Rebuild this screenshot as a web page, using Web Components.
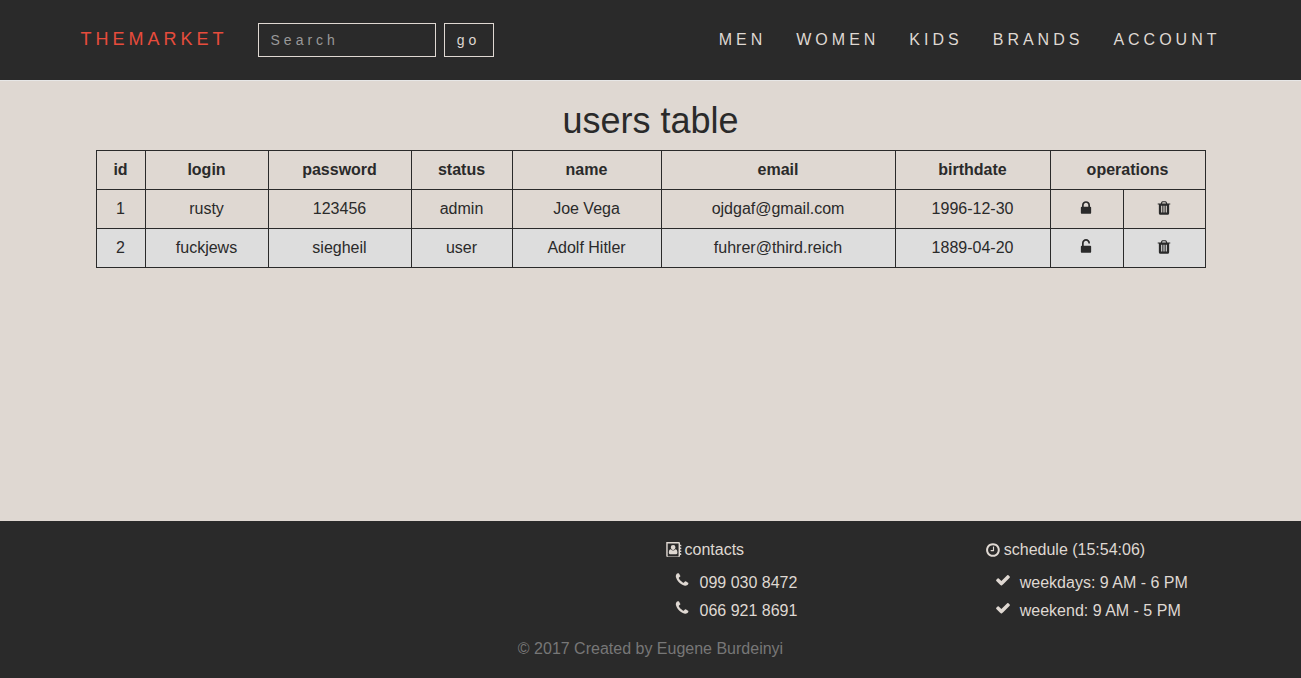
<!DOCTYPE html>
<html lang="en">
<head>
<meta charset="utf-8">
<meta name="viewport" content="width=device-width, initial-scale=1">
<title>users table</title>
<style>
  body {
    margin: 0;
    font: 16px/20px "Liberation Sans", Arial, sans-serif;
    color: #2a2a2a;
    background: #dfd8d2;
    --dark: #2a2a2a;
    --light: #dfd8d2;
    --brand: #e74c3c;
  }
</style>
</head>
<body>
<market-page>
  <market-header slot="header">
    <nav-link href="#men">MEN</nav-link>
    <nav-link href="#women">WOMEN</nav-link>
    <nav-link href="#kids">KIDS</nav-link>
    <nav-link href="#brands">BRANDS</nav-link>
    <nav-link href="#account">ACCOUNT</nav-link>
  </market-header>
  <users-table></users-table>
  <market-footer slot="footer">
    <info-list slot="contacts" icon="book" item-icon="phone" heading="contacts" items="099 030 8472|066 921 8691"></info-list>
    <info-list slot="schedule" icon="clock" item-icon="check" heading="schedule (15:54:06)" items="weekdays: 9 AM - 6 PM|weekend: 9 AM - 5 PM"></info-list>
    © 2017 Created by Eugene Burdeinyi
  </market-footer>
</market-page>
<script>
const ICONS = {
  lock: '<path d="M640 768h512v-192q0-106-75-181t-181-75-181 75-75 181v192zm832 96v576q0 40-28 68t-68 28h-960q-40 0-68-28t-28-68v-576q0-40 28-68t68-28h32v-192q0-184 132-316t316-132 316 132 132 316v192h32q40 0 68 28t28 68z"/>',
  unlock: '<path d="M1376 768q40 0 68 28t28 68v576q0 40-28 68t-68 28h-960q-40 0-68-28t-28-68v-576q0-40 28-68t68-28h32v-320q0-185 131.500-316.500t316.500-131.500 316.500 131.500 131.500 316.500q0 26-19 45t-45 19h-64q-26 0-45-19t-19-45q0-106-75-181t-181-75-181 75-75 181v320h736z"/>',
  trash: '<path d="M704 1376v-704q0-14-9-23t-23-9h-64q-14 0-23 9t-9 23v704q0 14 9 23t23 9h64q14 0 23-9t9-23zm256 0v-704q0-14-9-23t-23-9h-64q-14 0-23 9t-9 23v704q0 14 9 23t23 9h64q14 0 23-9t9-23zm256 0v-704q0-14-9-23t-23-9h-64q-14 0-23 9t-9 23v704q0 14 9 23t23 9h64q14 0 23-9t9-23zm-544-992h448l-48-117q-7-9-17-11h-317q-10 2-17 11zm928 32v64q0 14-9 23t-23 9h-96v948q0 83-47 143.500t-113 60.500h-832q-66 0-113-58.500t-47-141.500v-952h-96q-14 0-23-9t-9-23v-64q0-14 9-23t23-9h309l70-167q15-37 54-63t79-26h320q40 0 79 26t54 63l70 167h309q14 0 23 9t9 23z"/>',
  clock: '<path d="M1024 544v448q0 14-9 23t-23 9h-320q-14 0-23-9t-9-23v-64q0-14 9-23t23-9h224v-352q0-14 9-23t23-9h64q14 0 23 9t9 23zm416 352q0-148-73-273t-198-198-273-73-273 73-198 198-73 273 73 273 198 198 273 73 273-73 198-198 73-273zm224 0q0 209-103 385.500t-279.500 279.500-385.500 103-385.500-103-279.500-279.500-103-385.500 103-385.500 279.500-279.500 385.500-103 385.500 103 279.500 279.500 103 385.500z"/>',
  check: '<path d="M1671 566q0 40-28 68l-724 724-136 136q-28 28-68 28t-68-28l-136-136-362-362q-28-28-28-68t28-68l136-136q28-28 68-28t68 28l294 295 656-657q28-28 68-28t68 28l136 136q28 28 28 68z"/>',
  phone: '<path d="M1600 1240q0 27-10 70.500t-21 68.500q-21 50-122 106-94 51-186 51-27 0-53-3.500t-57-12.500-47-14.500-55.500-20.500-49.500-18q-98-35-175-83-127-79-264-216t-216-264q-48-77-83-175-3-9-18-49.500t-20.500-55.500-14.500-47-12.500-57-3.500-53q0-92 51-186 56-101 106-122 25-11 68.500-21t70.500-10q14 0 21 3 18 6 53 76 11 19 30 54t35 63.500 31 53.500q3 4 17.500 25t21.500 35.500 7 28.500q0 20-28.500 50t-62 55-62 53-28.500 46q0 9 5 22.500t8.500 20.500 14 24 11.500 19q76 137 174 235t235 174q2 1 19 11.500t24 14 20.500 8.500 22.500 5q18 0 46-28.500t53-62 55-62 50-28.500q14 0 28.500 7t35.500 21.500 25 17.500q25 15 53.500 31t63.500 35 54 30q70 35 76 53 3 7 3 21z"/>',
  book: '<path fill-rule="evenodd" d="M140 0h1260q140 0 140 140v160h100q46 0 46 46v90q0 46-46 46h-100v140h100q46 0 46 46v90q0 46-46 46h-100v140h100q46 0 46 46v90q0 46-46 46h-100v140h100q46 0 46 46v90q0 46-46 46h-100v104q0 140-140 140h-1260q-140 0-140-140v-1512q0-140 140-140zm20 160v1472h1220v-1472z"/><path d="M770 330a260 260 0 0 1 260 270c0 150-110 300-260 300s-260-150-260-300a260 260 0 0 1 260-270zM520 800q110 140 250 140t250-140c170 10 230 190 230 400q0 160-130 160h-700q-130 0-130-160c0-210 60-390 230-400z"/>'
};

const VIEW_BOXES = { clock: '128 0 1664 1792', phone: '100 0 1792 1792', book: '-28 0 1792 1792' };

class BaseElement extends HTMLElement {
  connectedCallback() {
    if (!this.shadowRoot) this.attachShadow({ mode: 'open' }).innerHTML = this.render();
  }
}

customElements.define('market-icon', class extends BaseElement {
  render() {
    const name = this.getAttribute('name');
    return `<style>
      :host { display: inline-block; width: 16px; height: 16px; }
      :host([name="clock"]) { width: 15px; }
      svg { display: block; width: 100%; height: 100%; fill: currentColor; }
    </style><svg viewBox="${VIEW_BOXES[name] || '0 0 1792 1792'}" aria-hidden="true">${ICONS[name]}</svg>`;
  }
});

customElements.define('market-page', class extends BaseElement {
  render() {
    return `<style>
      :host { display: flex; flex-direction: column; min-height: 100vh; }
      main { flex: 1; }
    </style><slot name="header"></slot><main><slot></slot></main><slot name="footer"></slot>`;
  }
});

customElements.define('nav-link', class extends BaseElement {
  render() {
    return `<style>
      :host { display: block; }
      a { display: block; padding: 0 15px; color: inherit; text-decoration: none; }
    </style><a href="${this.getAttribute('href')}"><slot></slot></a>`;
  }
});

customElements.define('market-header', class extends BaseElement {
  render() {
    return `<style>
      :host { display: block; background: var(--dark); color: var(--light); border-bottom: 1px solid #e7e7e7; letter-spacing: 4px; }
      .bar { display: flex; align-items: center; max-width: 1170px; height: 80px; margin: 0 auto; }
      .brand { padding: 0 15px 2px; font-size: 18px; color: var(--brand); text-decoration: none; }
      form { display: flex; gap: 8px; margin-left: 15px; }
      input, button { box-sizing: border-box; height: 34px; margin: 0; border: 1px solid var(--light); border-radius: 0; background: transparent; color: inherit; font: 14px/20px "Liberation Sans", Arial, sans-serif; letter-spacing: inherit; padding: 6px 12px; }
      input { width: 178px; }
      button { width: 50px; }
      input::placeholder { color: #999; opacity: 1; }
      nav { display: flex; margin-left: auto; }
    </style>
    <div class="bar">
      <a class="brand" href="#">THEMARKET</a>
      <form><input type="search" placeholder="Search" aria-label="Search"><button type="button">go</button></form>
      <nav><slot></slot></nav>
    </div>`;
  }
});

customElements.define('users-table', class extends BaseElement {
  render() {
    const rows = [
      ['1', 'rusty', '123456', 'admin', 'Joe Vega', 'ojdgaf@gmail.com', '1996-12-30', 'lock'],
      ['2', 'fuckjews', 'siegheil', 'user', 'Adolf Hitler', 'fuhrer@third.reich', '1889-04-20', 'unlock']
    ];
    const widths = [49, 123, 143, 101, 149, 234, 155, 73, 82];
    const heads = ['id', 'login', 'password', 'status', 'name', 'email', 'birthdate'];
    return `<style>
      :host { display: block; max-width: 1110px; margin: 0 auto; text-align: center; }
      h1 { margin: 20px 0 9px; font-size: 36px; line-height: 40px; font-weight: 400; }
      table { width: 100%; table-layout: fixed; border-collapse: collapse; }
      th, td { height: 38px; padding: 0; border: 1px solid var(--dark); }
      tbody tr:nth-child(even) { background: #ddd; }
      button { display: block; margin: 0 auto; padding: 0 1px 2px 0; border: 0; background: none; color: inherit; cursor: pointer; }
      market-icon { display: block; }
    </style>
    <h1>users table</h1>
    <table>
      <colgroup>${widths.map(w => `<col style="width:${w}px">`).join('')}</colgroup>
      <thead><tr>${heads.map(h => `<th scope="col">${h}</th>`).join('')}<th scope="colgroup" colspan="2">operations</th></tr></thead>
      <tbody>${rows.map(r => `<tr>${r.slice(0, 7).map(c => `<td>${c}</td>`).join('')}
        <td><button type="button" aria-label="${r[7]}"><market-icon name="${r[7]}"></market-icon></button></td>
        <td><button type="button" aria-label="delete"><market-icon name="trash"></market-icon></button></td></tr>`).join('')}</tbody>
    </table>`;
  }
});

customElements.define('info-list', class extends BaseElement {
  render() {
    const icon = this.getAttribute('item-icon');
    return `<style>
      :host { display: block; padding: 0 15px; }
      .head { display: flex; align-items: center; gap: 3px; margin-bottom: 9px; }
      ul { list-style: none; margin: 0; padding: 0 0 0 9px; }
      li { display: flex; gap: 9px; line-height: 28px; }
      li market-icon { margin-top: 3px; }
    </style>
    <div class="head"><market-icon name="${this.getAttribute('icon')}"></market-icon>${this.getAttribute('heading')}</div>
    <ul>${this.getAttribute('items').split('|').map(t => `<li><market-icon name="${icon}"></market-icon>${t}</li>`).join('')}</ul>`;
  }
});

customElements.define('market-footer', class extends BaseElement {
  render() {
    return `<style>
      :host { display: block; padding: 19px 10px; background: var(--dark); color: var(--light); }
      .columns { display: grid; grid-template-columns: 2fr 1fr 1fr; }
      ::slotted([slot="contacts"]) { grid-column: 2; }
      p { margin: 14px 0 0; text-align: center; color: #777; }
    </style>
    <div class="columns"><slot name="contacts"></slot><slot name="schedule"></slot></div>
    <p><slot></slot></p>`;
  }
});
</script>
</body>
</html>
